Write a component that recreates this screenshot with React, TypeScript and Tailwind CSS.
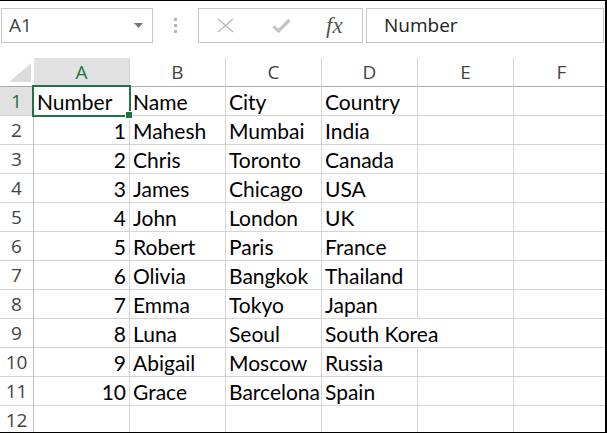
import React from "react";

const rows: [string, string, string, string][] = [
  ["Number", "Name", "City", "Country"],
  ["1", "Mahesh", "Mumbai", "India"],
  ["2", "Chris", "Toronto", "Canada"],
  ["3", "James", "Chicago", "USA"],
  ["4", "John", "London", "UK"],
  ["5", "Robert", "Paris", "France"],
  ["6", "Olivia", "Bangkok", "Thailand"],
  ["7", "Emma", "Tokyo", "Japan"],
  ["8", "Luna", "Seoul", "South Korea"],
  ["9", "Abigail", "Moscow", "Russia"],
  ["10", "Grace", "Barcelona", "Spain"],
  ["", "", "", ""],
];

const cols = ["A", "B", "C", "D", "E", "F"];

function Toolbar() {
  return (
    <div className="flex h-[57px] items-start pt-[7px] font-['Open_Sans',sans-serif]">
      <div className="ml-[1px] flex h-[35px] w-[152px] items-center justify-between border border-[#c6c6c6] pl-[7px] pr-[9px]">
        <span className="text-[19px] text-[#444]">A1</span>
        <svg width="9" height="5" viewBox="0 0 9 5">
          <path d="M0 0h9L4.5 5z" fill="#777" />
        </svg>
      </div>
      <div className="flex h-[35px] w-[45px] flex-col items-center justify-center gap-[3px]">
        <div className="h-[3px] w-[3px] bg-[#b5b5b5]" />
        <div className="h-[3px] w-[3px] bg-[#b5b5b5]" />
        <div className="h-[3px] w-[3px] bg-[#b5b5b5]" />
      </div>
      <div className="flex h-[35px] w-[165px] items-center border border-[#c6c6c6]">
        <svg className="ml-[18px]" width="17" height="15" viewBox="0 0 17 15">
          <path d="M1 1l15 13M16 1L1 14" stroke="#bdbdbd" strokeWidth="1.6" />
        </svg>
        <svg className="ml-[38px]" width="19" height="15" viewBox="0 0 19 15">
          <path d="M1.5 8.5l5 4.5L17.5 2" stroke="#c4c4c4" strokeWidth="3.2" fill="none" />
        </svg>
        <span className="ml-[35px] font-['Liberation_Serif',serif] text-[23px] italic leading-none text-[#555]">
          fx
        </span>
      </div>
      <div className="ml-[3px] flex h-[35px] w-[238px] items-center border border-[#c6c6c6] pl-[17px]">
        <span className="text-[19px] text-[#222]">Number</span>
      </div>
    </div>
  );
}

export default function App() {
  return (
    <div className="h-[433px] w-[607px] overflow-hidden border-t border-r-2 border-b border-black bg-white">
      <Toolbar />
      <div className="grid grid-cols-[34px_96px_96px_96px_96px_96px_96px]">
        <div className="relative h-[29px] border-b border-[#ababab]">
          <svg className="absolute left-[9px] top-[5px]" width="22" height="19" viewBox="0 0 22 19">
            <path d="M0 19L22 0V19z" fill="#dcdcdc" />
          </svg>
        </div>
        {cols.map((c, i) => (
          <div
            key={c}
            className={`flex h-[29px] items-center justify-center border-b border-r border-b-[#ababab] border-r-[#d4d4d4] pt-[1px] font-['Open_Sans',sans-serif] text-[19px] ${
              i === 0 ? "bg-[#e1e1e1] text-[#217346]" : "text-[#444]"
            }`}
          >
            {c}
          </div>
        ))}
        {rows.map((r, ri) => (
          <React.Fragment key={ri}>
            <div
              className={`flex h-[29px] items-center justify-center border-b border-r border-[#d4d4d4] border-r-[#bdbdbd] pt-[1px] font-['Open_Sans',sans-serif] text-[19px] ${
                ri === 0 ? "bg-[#e1e1e1] text-[#217346]" : "text-[#444]"
              }`}
            >
              {ri + 1}
            </div>
            {[0, 1, 2, 3, 4, 5].map((ci) => {
              const v = ci < 4 ? r[ci] : "";
              const right = ri > 0 && ci === 0;
              const overflow = v === "South Korea";
              const selected = ri === 0 && ci === 0;
              return (
                <div
                  key={ci}
                  className={`relative flex h-[29px] items-end whitespace-nowrap border-b border-[#d4d4d4] px-[3px] font-['Lato',sans-serif] text-[21px] text-black ${
                    overflow || selected ? "z-10" : ""
                  } ${overflow ? "" : "border-r"} ${right ? "justify-end" : "justify-start"}`}
                >
                  <span className="mb-[-1px] leading-[28px]">{v}</span>
                  {selected && (
                    <>
                      <div className="pointer-events-none absolute -bottom-[2px] -left-[2px] -right-[2px] -top-[2px] border-2 border-[#217346]" />
                      <div className="absolute left-[91px] top-[24px] h-[8px] w-[8px] border border-white bg-[#217346]" />
                    </>
                  )}
                </div>
              );
            })}
          </React.Fragment>
        ))}
      </div>
    </div>
  );
}
